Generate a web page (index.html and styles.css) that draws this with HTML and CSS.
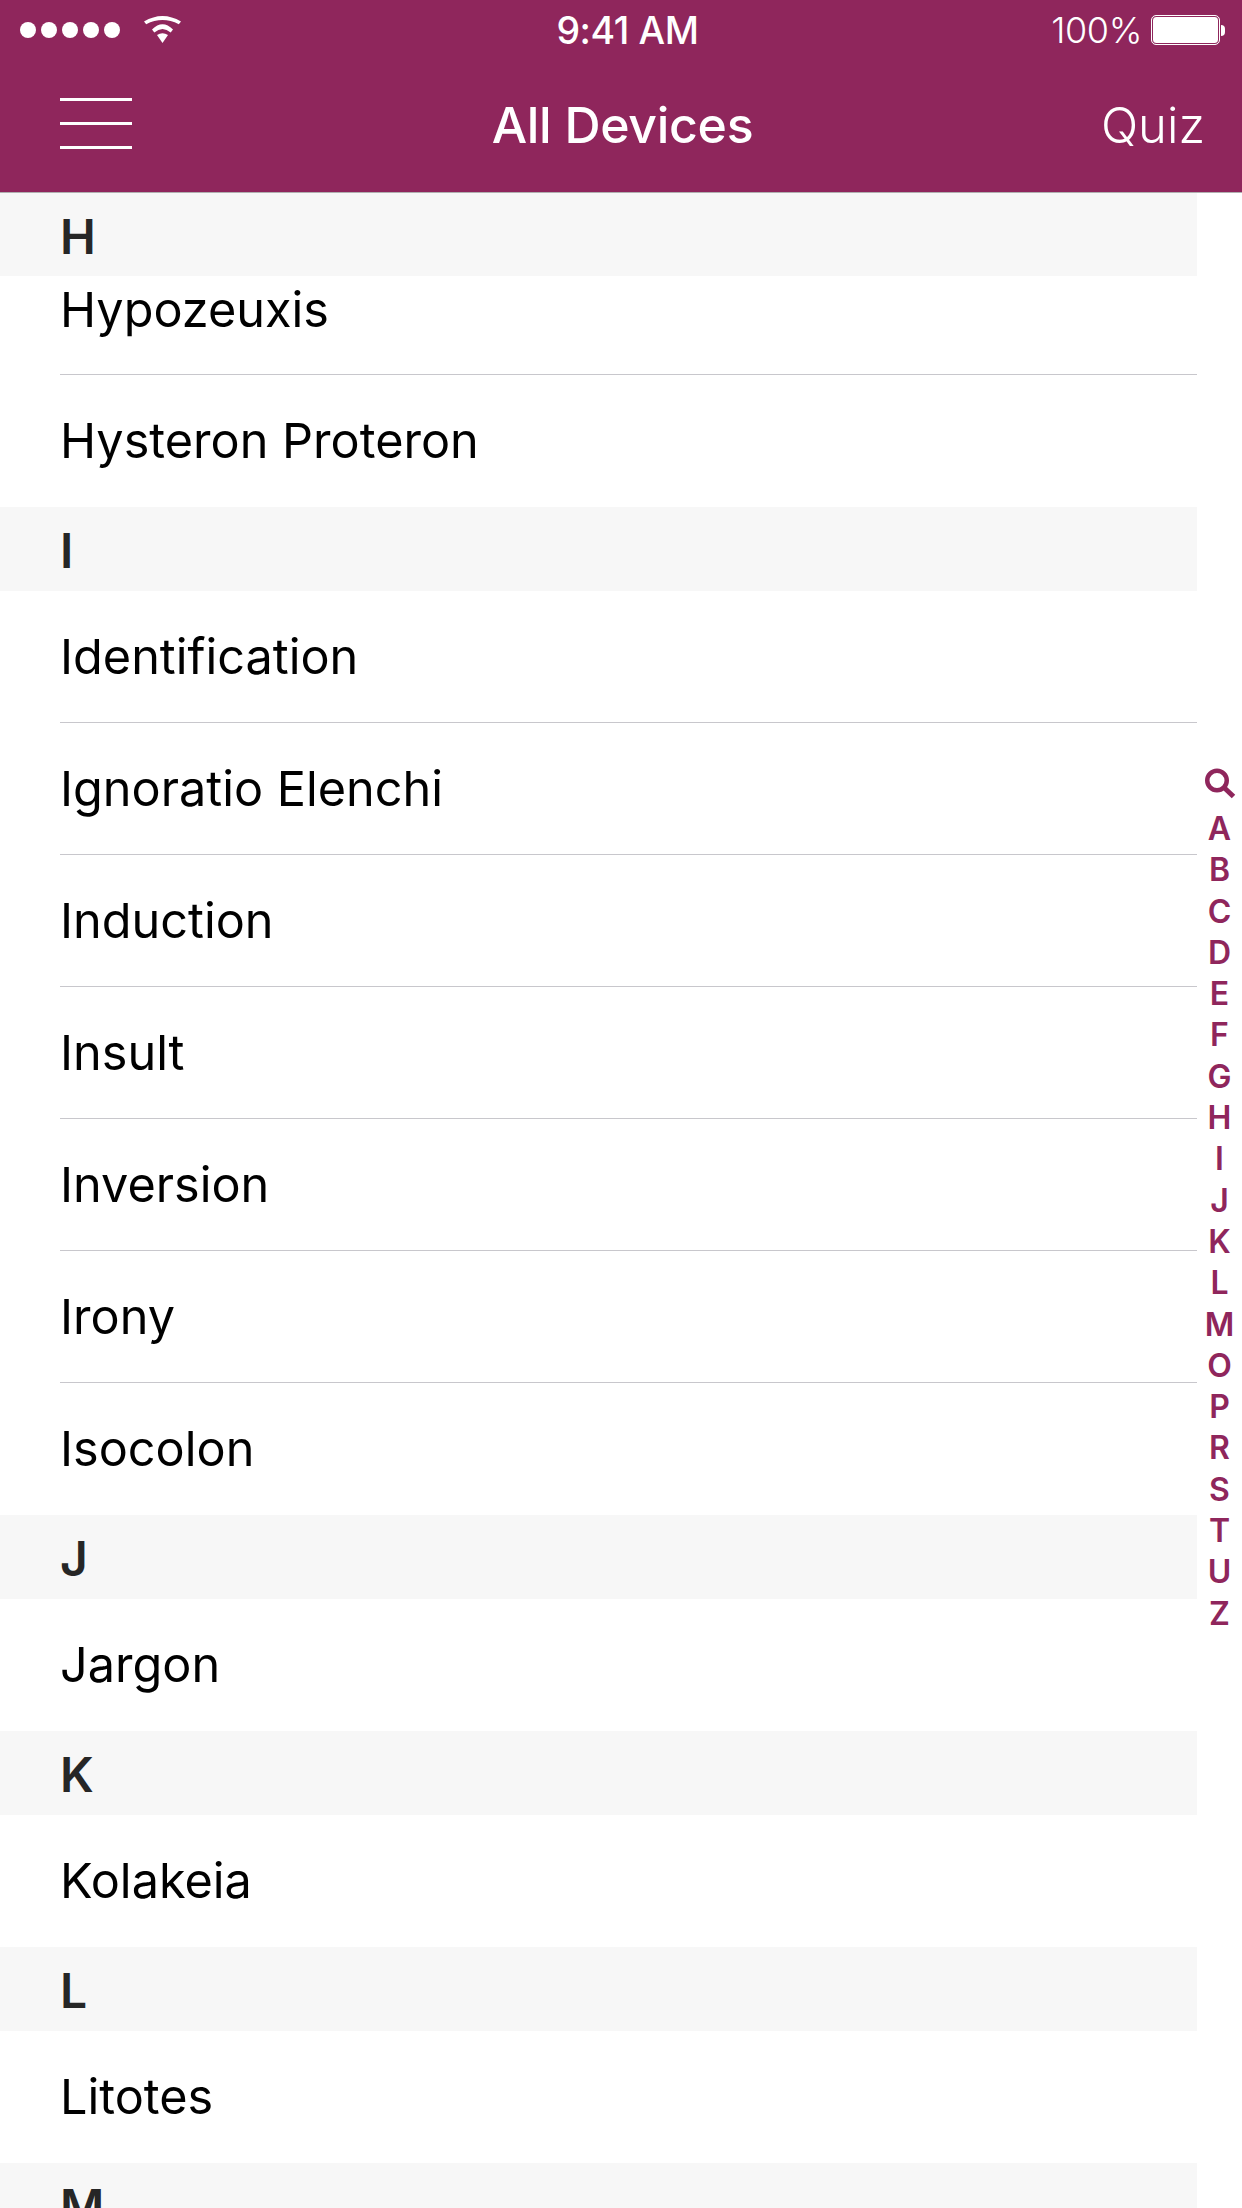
FILE: index.html
```html
<!DOCTYPE html>
<html lang="en">
<head>
<meta charset="utf-8">
<title>All Devices</title>
<link rel="stylesheet" href="styles.css">
</head>
<body>
<div class="screen">
  <header class="top">
    <div class="status">
      <div class="status-left">
        <div class="signal"><i></i><i></i><i></i><i></i><i></i></div>
        <svg class="wifi" width="38" height="30" viewBox="0 0 38 30">
          <path d="M0 7.500Q18.500 -3.500 37 7.500L34.800 10.200Q18.500 1.800 2.200 10.200Z" fill="#fff"/>
          <path d="M8 15.500Q18.500 5 29 15.500L26.700 18.500Q18.500 11.500 10.300 18.500Z" fill="#fff"/>
          <path d="M13 21Q18.500 17.500 24 21L18.500 29Z" fill="#fff"/>
        </svg>
      </div>
      <div class="clock">9:41 AM</div>
      <div class="status-right">
        <span class="pct">100%</span>
        <div class="battery"><div class="battery-body"></div><div class="battery-tip"></div></div>
      </div>
    </div>
    <nav class="bar">
      <div class="burger"><i></i><i></i><i></i></div>
      <div class="title">All Devices</div>
      <div class="quiz">Quiz</div>
    </nav>
  </header>
  <main class="list">
    <div class="head head-first">H</div>
    <div class="row row-first">Hypozeuxis</div>
    <div class="row row-last">Hysteron Proteron</div>
    <div class="head">I</div>
    <div class="row">Identification</div>
    <div class="row">Ignoratio Elenchi</div>
    <div class="row">Induction</div>
    <div class="row">Insult</div>
    <div class="row">Inversion</div>
    <div class="row">Irony</div>
    <div class="row row-last">Isocolon</div>
    <div class="head">J</div>
    <div class="row row-last">Jargon</div>
    <div class="head">K</div>
    <div class="row row-last">Kolakeia</div>
    <div class="head">L</div>
    <div class="row row-last">Litotes</div>
    <div class="head">M</div>
  </main>
  <aside class="index">
    <svg class="index-search" width="32" height="32" viewBox="0 0 32 32">
      <circle cx="13" cy="13.500" r="9.750" fill="none" stroke="#8f265c" stroke-width="4.500"/>
      <path d="M20.500 21L29.500 29.500" stroke="#8f265c" stroke-width="5" fill="none"/>
    </svg>
    <span>A</span><span>B</span><span>C</span><span>D</span><span>E</span><span>F</span><span>G</span><span>H</span><span>I</span><span>J</span><span>K</span><span>L</span><span>M</span><span>O</span><span>P</span><span>R</span><span>S</span><span>T</span><span>U</span><span>Z</span>
  </aside>
</div>
</body>
</html>
```
FILE: styles.css
```css
* { box-sizing: border-box; }
html, body { margin: 0; padding: 0; background: #fff; }
.screen {
  position: relative;
  width: 1242px;
  height: 2208px;
  overflow: hidden;
  font-family: Inter, "Liberation Sans", sans-serif;
  background: #fff;
}
.top {
  height: 193px;
  background: #8f265c;
  border-bottom: 1px solid #b0b0b0;
  color: #fff;
}
.status {
  height: 60px;
  display: grid;
  grid-template-columns: 1fr auto 1fr;
  align-items: center;
  padding: 0 17px 0 20px;
}
.status-left { display: flex; align-items: center; gap: 24px; }
.signal { display: flex; gap: 5px; }
.signal i { width: 16px; height: 16px; border-radius: 50%; background: #fff; display: block; }
.wifi { display: block; margin-top: -2px; }
.clock { font-size: 37.500px; font-weight: 500; letter-spacing: -0.4px; padding-left: 10px; }
.status-right { display: flex; align-items: center; justify-content: flex-end; gap: 10px; }
.pct { font-size: 36px; font-weight: 300; letter-spacing: -0.4px; }
.battery { display: flex; align-items: center; gap: 2px; }
.battery-body {
  width: 67px;
  height: 28px;
  background: #fff;
  border: 1px solid #8f265c;
  outline: 1px solid #fff;
  border-radius: 4px;
}
.battery-tip { width: 4px; height: 11px; background: #fff; border-radius: 0 4px 4px 0; }
.bar {
  height: 132px;
  display: grid;
  grid-template-columns: 1fr auto 1fr;
  align-items: center;
  padding: 0 37px 2px 60px;
}
.burger { display: flex; flex-direction: column; gap: 21px; width: 72px; margin-top: -4px; }
.burger i { display: block; height: 3px; background: #fff; }
.title { font-size: 50px; font-weight: 500; letter-spacing: -0.3px; padding-right: 20px; }
.quiz { font-size: 49px; font-weight: 300; text-align: right; }
.list { width: 1197px; }
.head {
  height: 84px;
  padding: 15px 0 0 60px;
  background: #f7f7f7;
  color: #262626;
  font-size: 48px;
  font-weight: 600;
  line-height: 58px;
}
.head-first { height: 83px; }
.row {
  height: 132px;
  margin-left: 60px;
  border-bottom: 1px solid #c8c7cc;
  color: #000;
  font-size: 48.600px;
  font-weight: 400;
  line-height: 131px;
}
.row-first { height: 99px; line-height: 67px; }
.row-last { border-bottom: 0; }
.index {
  position: absolute;
  top: 767px;
  left: 1197px;
  width: 45px;
  display: flex;
  flex-direction: column;
  align-items: center;
  color: #8f265c;
  font-size: 32px;
  font-weight: 600;
  line-height: 41.300px;
}
.index-search { display: block; margin-bottom: 9px; }
```
